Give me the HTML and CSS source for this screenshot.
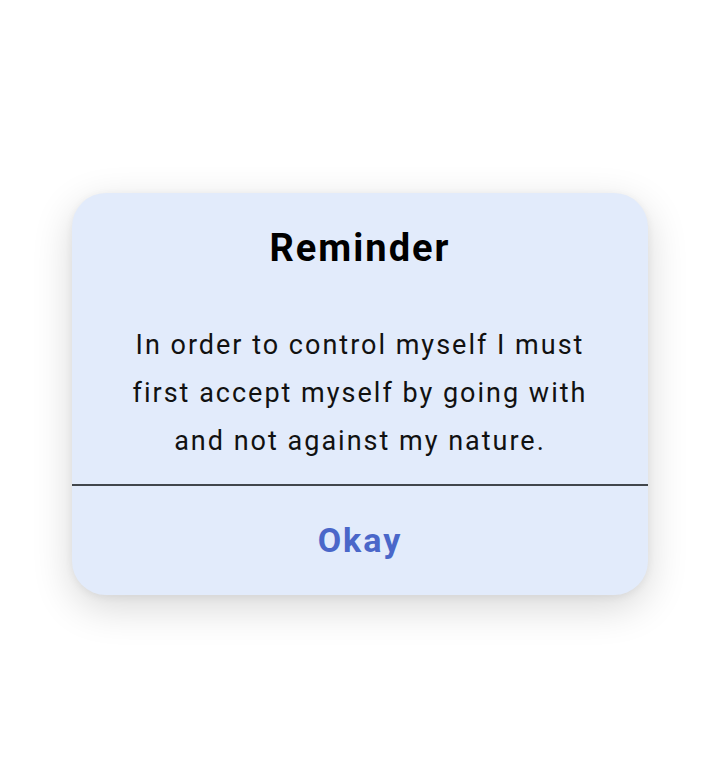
FILE: index.html
```html
<!DOCTYPE html>
<html lang="en">
<head>
<meta charset="utf-8">
<title>Reminder</title>
<link rel="stylesheet" href="styles.css">
</head>
<body>
<div class="page">
  <div class="dialog" role="dialog" aria-labelledby="dlg-title">
    <h1 class="dialog-title" id="dlg-title">Reminder</h1>
    <p class="dialog-message">In order to control myself I must<br>first accept myself by going with<br>and not against my nature.</p>
    <div class="dialog-divider"></div>
    <div class="dialog-actions">
      <button class="dialog-button" type="button">Okay</button>
    </div>
  </div>
</div>
</body>
</html>
```

FILE: styles.css
```css
html, body {
  margin: 0;
  padding: 0;
  background: #ffffff;
}

body {
  font-family: Roboto, "Noto Sans", "Liberation Sans", sans-serif;
  color: #111111;
}

.page {
  width: 720px;
  height: 780px;
  box-sizing: border-box;
  padding-top: 193px;
  display: flex;
  flex-direction: column;
  align-items: center;
}

.dialog {
  width: 576px;
  height: 402px;
  box-sizing: border-box;
  background: #e2ebfb;
  border-radius: 34px;
  box-shadow: 0 12px 40px rgba(0, 0, 0, 0.16), 0 2px 8px rgba(0, 0, 0, 0.06);
  display: flex;
  flex-direction: column;
  align-items: stretch;
  padding-top: 31px;
}

.dialog-title {
  margin: 0;
  font-size: 38px;
  line-height: 48px;
  font-weight: 700;
  letter-spacing: 2px;
  text-align: center;
  color: #000000;
}

.dialog-message {
  margin: 49px 0 0;
  font-size: 27px;
  line-height: 48px;
  font-weight: 400;
  letter-spacing: 2px;
  text-align: center;
  color: #111111;
}

.dialog-divider {
  margin-top: 19px;
  height: 2px;
  background: #41464c;
}

.dialog-actions {
  display: flex;
  justify-content: center;
  padding-top: 34px;
}

.dialog-button {
  border: none;
  background: transparent;
  padding: 0;
  font-family: inherit;
  font-size: 34px;
  line-height: 40px;
  font-weight: 700;
  letter-spacing: 2px;
  color: #4a67c9;
  cursor: pointer;
}
```
